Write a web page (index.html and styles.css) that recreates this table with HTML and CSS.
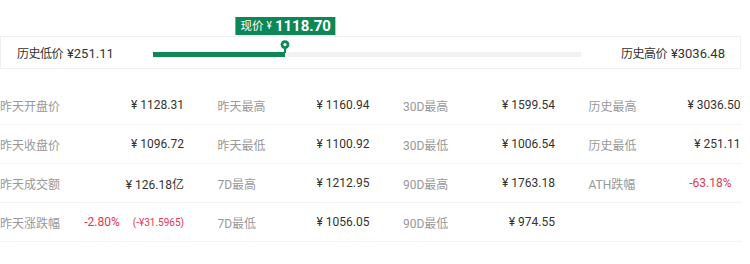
FILE: index.html
```html
<!DOCTYPE html>
<html lang="zh">
<head>
<meta charset="utf-8">
<title>价格统计</title>
<link rel="stylesheet" href="styles.css">
</head>
<body>
<div class="page">
  <div class="range">
    <div class="range-label"><span class="cjk">历史低价</span> <span class="num">¥251.11</span></div>
    <div class="track">
      <div class="fill" style="width: 30.9%"></div>
      <div class="pin" style="left: 30.9%">
        <svg width="10" height="13" viewBox="0 0 10 13"><rect x="4" y="7" width="2" height="6" fill="#0e8757"/><circle cx="5" cy="4.6" r="4.4" fill="#0e8757"/><circle cx="5" cy="4.6" r="1.6" fill="#fff"/></svg>
      </div>
      <div class="tip" style="left: 30.9%"><span class="tip-cjk">现价</span><span class="tip-yen">¥</span><span class="tip-num">1118.70</span></div>
    </div>
    <div class="range-label right"><span class="cjk">历史高价</span> <span class="num">¥3036.48</span></div>
  </div>

  <div class="stats">
    <div class="row">
      <div class="cell"><span class="label">昨天开盘价</span><span class="value">¥ 1128.31</span></div>
      <div class="cell"><span class="label">昨天最高</span><span class="value">¥ 1160.94</span></div>
      <div class="cell"><span class="label">30D最高</span><span class="value">¥ 1599.54</span></div>
      <div class="cell"><span class="label">历史最高</span><span class="value">¥ 3036.50</span></div>
    </div>
    <div class="row">
      <div class="cell"><span class="label">昨天收盘价</span><span class="value">¥ 1096.72</span></div>
      <div class="cell"><span class="label">昨天最低</span><span class="value">¥ 1100.92</span></div>
      <div class="cell"><span class="label">30D最低</span><span class="value">¥ 1006.54</span></div>
      <div class="cell"><span class="label">历史最低</span><span class="value">¥ 251.11</span></div>
    </div>
    <div class="row">
      <div class="cell"><span class="label">昨天成交额</span><span class="value">¥ 126.18亿</span></div>
      <div class="cell"><span class="label">7D最高</span><span class="value">¥ 1212.95</span></div>
      <div class="cell"><span class="label">90D最高</span><span class="value">¥ 1763.18</span></div>
      <div class="cell"><span class="label">ATH跌幅</span><span class="value down pad">-63.18%</span></div>
    </div>
    <div class="row">
      <div class="cell"><span class="label">昨天涨跌幅</span><span class="value down"><span class="pct">-2.80%</span><span class="diff">(-¥31.5965)</span></span></div>
      <div class="cell"><span class="label">7D最低</span><span class="value">¥ 1056.05</span></div>
      <div class="cell"><span class="label">90D最低</span><span class="value">¥ 974.55</span></div>
      <div class="cell"></div>
    </div>
  </div>
</div>
</body>
</html>
```

FILE: styles.css
```css
* { box-sizing: border-box; }

html, body {
  margin: 0;
  padding: 0;
  background: #ffffff;
}

body {
  font-family: Roboto, "Noto Sans CJK SC", sans-serif;
  color: #333333;
  width: 750px;
  height: 264px;
  overflow: hidden;
}

.page {
  padding-top: 36px;
}

.range {
  width: 741px;
  height: 33px;
  border: 1px solid #f0f0f0;
  display: grid;
  grid-template-columns: 136px 428px 1fr;
  align-items: center;
  padding: 0 15px 0 16px;
}

.range-label {
  white-space: nowrap;
  color: #333333;
  line-height: 1;
}

.range-label.right {
  justify-self: end;
}

.cjk {
  font-size: 12px;
  font-family: "Noto Sans CJK SC", sans-serif;
  letter-spacing: -0.5px;
}

.num {
  font-size: 13px;
  font-family: Roboto, sans-serif;
}

.track {
  position: relative;
  height: 5px;
  margin-top: 4px;
  background: #f2f2f2;
}

.fill {
  height: 100%;
  background: #0e8757;
}

.pin {
  position: absolute;
  bottom: 100%;
  width: 10px;
  height: 13px;
  margin-left: -5px;
  margin-bottom: -1px;
  line-height: 0;
}

.tip {
  position: absolute;
  bottom: calc(100% + 17px);
  transform: translateX(-50%);
  height: 18px;
  padding: 0 4px 0 5px;
  background: #0e8757;
  color: #ffffff;
  white-space: nowrap;
  display: flex;
  align-items: center;
  line-height: 1;
}

.tip-cjk {
  font-family: "Noto Sans CJK SC", sans-serif;
  font-size: 11.5px;
  margin-right: 3px;
}

.tip-yen {
  font-size: 10px;
  margin-right: 3px;
}

.tip-num {
  font-size: 15px;
  font-weight: 700;
}

.stats {
  margin-top: 17px;
}

.row {
  display: grid;
  grid-template-columns: 184px 152px 152px 152px;
  column-gap: 33.5px;
  width: 742px;
  height: 39px;
  align-items: center;
  border-bottom: 1px solid #f4f4f4;
}

.cell {
  display: flex;
  justify-content: space-between;
  align-items: center;
  white-space: nowrap;
}

.label {
  font-family: Roboto, "Noto Sans CJK SC", sans-serif;
  font-size: 12px;
  color: #999999;
}

.value {
  font-size: 12px;
  color: #333333;
}

.down {
  color: #e0384f;
}

.pad {
  margin-right: 9px;
}

.pct {
  font-size: 12px;
  margin-right: 13px;
}

.diff {
  font-size: 10px;
}
```
